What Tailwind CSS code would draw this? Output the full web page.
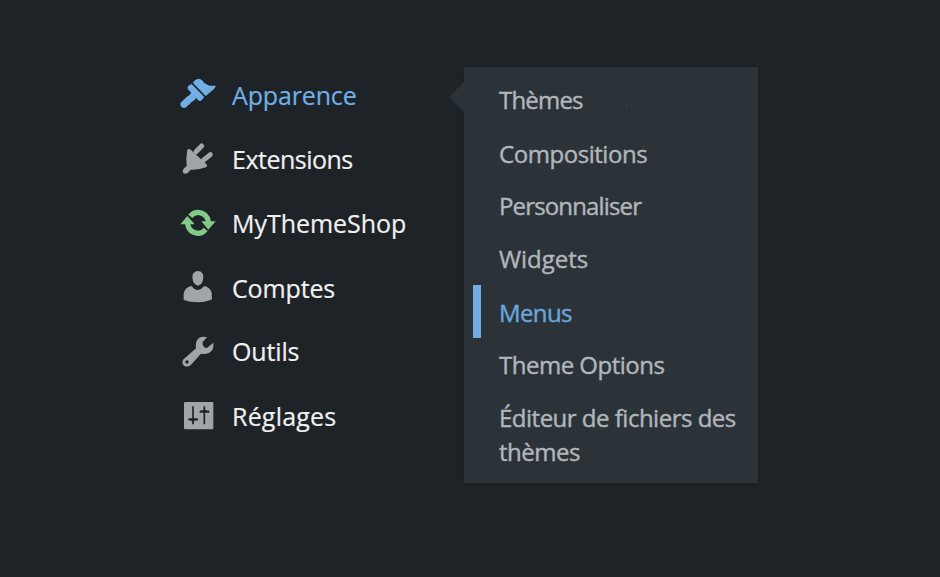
<!DOCTYPE html>
<html lang='fr'>

<head>
    <meta charset='UTF-8'>
    <meta name='viewport' content='width=device-width, initial-scale=1.0'>
    <title>Menus</title>
    <script src='https://cdn.jsdelivr.net/npm/@tailwindcss/browser@4'></script>
</head>

<body class="bg-[#1e2327] h-screen overflow-hidden font-['Open_Sans','Noto_Sans',sans-serif] text-2xl">

    <div class='flex items-start'>

        <!-- main menu -->
        <nav class='w-[464px] pl-[178px] pt-16 text-[25px] text-[#f0f0f1] [-webkit-text-stroke:0.2px]'>
            <a class='flex items-center gap-3.5 h-16 text-[#72aee6]'>
                <svg class='size-10 shrink-0' viewBox='24 33 120 120' fill='currentColor'>
                    <path d='M70 51Q76 42 86 41Q92 41 96 46Q106 59 119 62L138 62Q134 72 124 79L107 93L69 54Z' />
                    <path d='M65 57L103 96L93 107Q88 109 84 105L54 73Q51 66 55 62Z' />
                    <path d='M73 88Q68 98 57 104L42 118' fill='none' stroke='currentColor' stroke-width='21' stroke-linecap='round' />
                </svg>
                <span class='tracking-[-0.15px]'>Apparence</span>
            </a>
            <a class='flex items-center gap-3.5 h-16'>
                <svg class='size-10 shrink-0 text-[#a0a5aa]' viewBox='24 30 120 120' fill='currentColor'>
                    <path d='M52 59Q56 55 62 59L109 102Q114 108 108 112Q84 121 62 119L53 129Q45 134 39 128Q36 120 42 115L50 108Q47 84 52 59Z' />
                    <path d='M78 65L95 48M101 90L121 74' stroke='currentColor' stroke-width='15' stroke-linecap='round' />
                </svg>
                <span class='tracking-[-0.5px]'>Extensions</span>
            </a>
            <a class='flex items-center gap-3.5 h-16'>
                <svg class='size-10 shrink-0 text-[#82ca8a]' viewBox='24 27 120 120' fill='currentColor'>
                    <path d='M55 59Q66 44 84 44Q118 47 123 79H137L115 104L94 79H107Q103 62 84 60Q72 61 67 69Z' />
                    <path d='M113 108Q102 123 84 123Q50 120 45 88H31L52 63L74 88H61Q65 105 84 107Q96 106 101 98Z' />
                </svg>
                <span class='tracking-[-0.05px]'>MyThemeShop</span>
            </a>
            <a class='flex items-center gap-3.5 h-16'>
                <svg class='size-10 shrink-0 text-[#a0a5aa]' viewBox='24 24 120 120' fill='currentColor'>
                    <path d='M84 33Q100 34 100 51Q98 75 84 77Q69 75 67 51Q67 34 84 33Z' />
                    <path d='M65 78Q73 90 84 90Q95 89 102 78Q120 81 125 98L126 118Q108 127 84 127Q60 127 41 120V102Q43 82 65 78Z' />
                </svg>
                <span class='pt-0.5 tracking-[-0.15px]'>Comptes</span>
            </a>
            <a class='flex items-center gap-3.5 h-16'>
                <svg class='size-10 shrink-0 text-[#a0a5aa]' viewBox='24 21 120 120' fill='currentColor'>
                    <path fill-rule='evenodd' d='M111 37L98 51Q96 64 107 69Q112 70 117 64L130 53Q133 76 117 84Q106 89 93 86L63 119Q54 128 43 123Q34 116 39 104L78 70Q74 50 87 39Q98 32 111 37ZM51 106A5 5 0 1 0 51 116A5 5 0 1 0 51 106Z' />
                </svg>
                <span class='tracking-[-0.15px]'>Outils</span>
            </a>
            <a class='flex items-center gap-3.5 h-16'>
                <svg class='size-10 shrink-0 text-[#a0a5aa]' viewBox='24 33 120 120' fill='currentColor'>
                    <rect x='42' y='51' width='88' height='82' rx='4' />
                    <path d='M69 64V118M103 64V118' stroke='#1e2327' stroke-width='5' />
                    <path d='M58 103H81M92 80H115' stroke='#1e2327' stroke-width='7' stroke-linecap='round' />
                    <path d='M62 105H76L69 112ZM96 78H110L103 71Z' fill='#1e2327' />
                </svg>
                <span class='pt-0.5 tracking-[0.2px]'>Réglages</span>
            </a>
        </nav>

        <!-- submenu -->
        <div class='relative mt-[67px] w-[294px] h-[416px] bg-[#2c3338] pt-1.5 text-2xl leading-[34px] text-[#b1b6bb] [-webkit-text-stroke:0.4px] shadow-[0_3px_5px_rgba(0,0,0,0.1)]'>
            <svg class='absolute -left-[15px] top-[15px] w-[15px] h-[30px]' viewBox='0 0 15 30' fill='#2c3338'>
                <path d='M15 0V30L0 15Z' />
            </svg>
            <span class='absolute left-[162px] top-[38px] w-px h-0.5 bg-[#8d2d30]'></span>
            <a class='flex items-center h-[53px] pl-[35px] tracking-[-0.8px]'>Thèmes</a>
            <a class='flex items-center h-[53px] pt-0.5 pl-[35px] tracking-[-0.45px]'>Compositions</a>
            <a class='flex items-center h-[53px] pl-[35px] tracking-[-0.85px]'>Personnaliser</a>
            <a class='flex items-center h-[53px] pl-[35px] tracking-[-0.05px]'>Widgets</a>
            <a class='flex items-center h-[53px] pt-0.5 ml-[9px] border-l-8 border-[#72aee6] pl-[18px] text-[#69a6df] tracking-[-0.6px]'>Menus</a>
            <a class='flex items-center h-[53px] pl-[35px] tracking-[-0.5px]'>Theme Options</a>
            <a class='block pt-2.5 pl-[35px] tracking-[-0.5px]'>Éditeur de fichiers des thèmes</a>
        </div>

    </div>

</body>

</html>
